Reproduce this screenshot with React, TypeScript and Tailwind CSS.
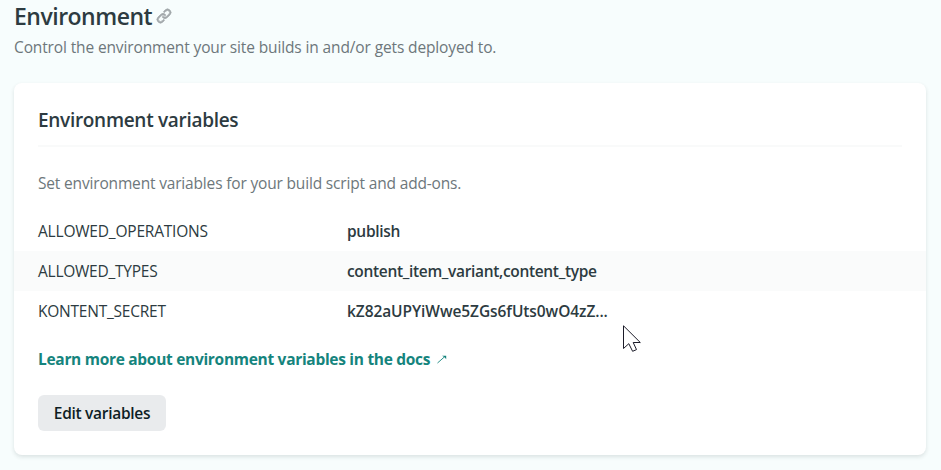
const variables = [
  { name: 'ALLOWED_OPERATIONS', value: 'publish', nameTracking: 'tracking-[-0.2px]', valueTracking: 'tracking-[-0.3px]' },
  { name: 'ALLOWED_TYPES', value: 'content_item_variant,content_type', nameTracking: 'tracking-[-0.25px]', valueTracking: 'tracking-[-0.33px]' },
  { name: 'KONTENT_SECRET', value: 'kZ82aUPYiWwe5ZGs6fUts0wO4zZ...', nameTracking: 'tracking-[-0.23px]', valueTracking: 'tracking-[-0.08px]' },
];

function LinkIcon() {
  return (
    <svg width="16" height="16" viewBox="0 0 16 16" fill="#a3a9ac" stroke="#a3a9ac" strokeWidth="0.7" aria-hidden="true">
      <path d="M7.775 3.275a.75.75 0 001.06 1.06l1.25-1.25a2 2 0 112.83 2.83l-2.5 2.5a2 2 0 01-2.83 0 .75.75 0 00-1.06 1.06 3.5 3.5 0 004.95 0l2.5-2.5a3.5 3.5 0 00-4.95-4.95l-1.25 1.25zm-4.69 9.64a2 2 0 010-2.83l2.5-2.5a2 2 0 012.83 0 .75.75 0 001.06-1.06 3.5 3.5 0 00-4.95 0l-2.5 2.5a3.5 3.5 0 004.95 4.95l1.25-1.25a.75.75 0 00-1.06-1.06l-1.25 1.25a2 2 0 01-2.83 0z" />
    </svg>
  );
}

function ArrowIcon() {
  return (
    <svg width="10" height="9" viewBox="0 0 10 9" aria-hidden="true">
      <path d="M0.5 8 8 1.4" stroke="#15847d" strokeWidth="0.9" fill="none" />
      <path d="M5 0.8h4.2v3.4L7.6 2.2z" fill="#15847d" />
    </svg>
  );
}

function Cursor() {
  return (
    <svg className="absolute left-[623px] top-[325px]" width="19" height="28" viewBox="0 0 19 28" aria-hidden="true">
      <path d="M0.5 0.8V23.5L5.8 18.7 9.6 26.3 13.5 24.6 10.2 17.5H17.3Z" fill="#fff" stroke="#1b1b28" strokeWidth="1" />
    </svg>
  );
}

export default function App() {
  return (
    <main className="relative h-[470px] w-[941px] overflow-hidden bg-[#f7fdfd] px-[14px] pr-[15px] font-['Open_Sans','Noto_Sans',sans-serif] text-[15.5px] text-[#2d3b41]">
      <header className="h-[83px]">
        <div className="flex h-8 items-center">
          <h1 className="text-[23px] font-[550] leading-8 tracking-[-0.5px]">Environment</h1>
          <a href="#environment" className="ml-1"><LinkIcon /></a>
        </div>
        <p className="mt-[3px] whitespace-nowrap leading-6 tracking-[-0.13px] text-[#6d777b]">Control the environment your site builds in and/or gets deployed to.</p>
      </header>
      <section className="h-[372px] rounded-lg bg-white shadow-[0_2px_4px_rgba(14,30,37,0.12)]">
        <div className="mx-6 flex h-[64px] items-center border-b-2 border-[#f9fafa] pt-3">
          <h2 className="text-[19px] font-[550] leading-6 tracking-[-0.3px]">Environment variables</h2>
        </div>
        <p className="mx-6 pt-6 leading-6 tracking-[-0.17px] text-[#6d777b]">Set environment variables for your build script and add-ons.</p>
        <dl className="mt-4">
          {variables.map((v) => (
            <div key={v.name} className="flex h-10 items-center px-6 leading-6 even:bg-[#fafbfb]">
              <dt className={`w-[309px] ${v.nameTracking}`}>{v.name}</dt>
              <dd className={`whitespace-nowrap font-[550] ${v.valueTracking}`}>{v.value}</dd>
            </div>
          ))}
        </dl>
        <a href="#docs" className="mx-6 mt-4 flex h-6 items-center font-bold leading-6 text-[#15847d]">
          <span className="whitespace-nowrap tracking-[-0.3px]">Learn more about environment variables in the docs</span>
          <span className="ml-[7px]"><ArrowIcon /></span>
        </a>
        <button className="ml-6 mt-6 h-9 w-32 rounded-md bg-[#e9ebed] font-[550] leading-6 tracking-[-0.3px] text-[#0e1e25]">Edit variables</button>
      </section>
      <Cursor />
    </main>
  );
}
